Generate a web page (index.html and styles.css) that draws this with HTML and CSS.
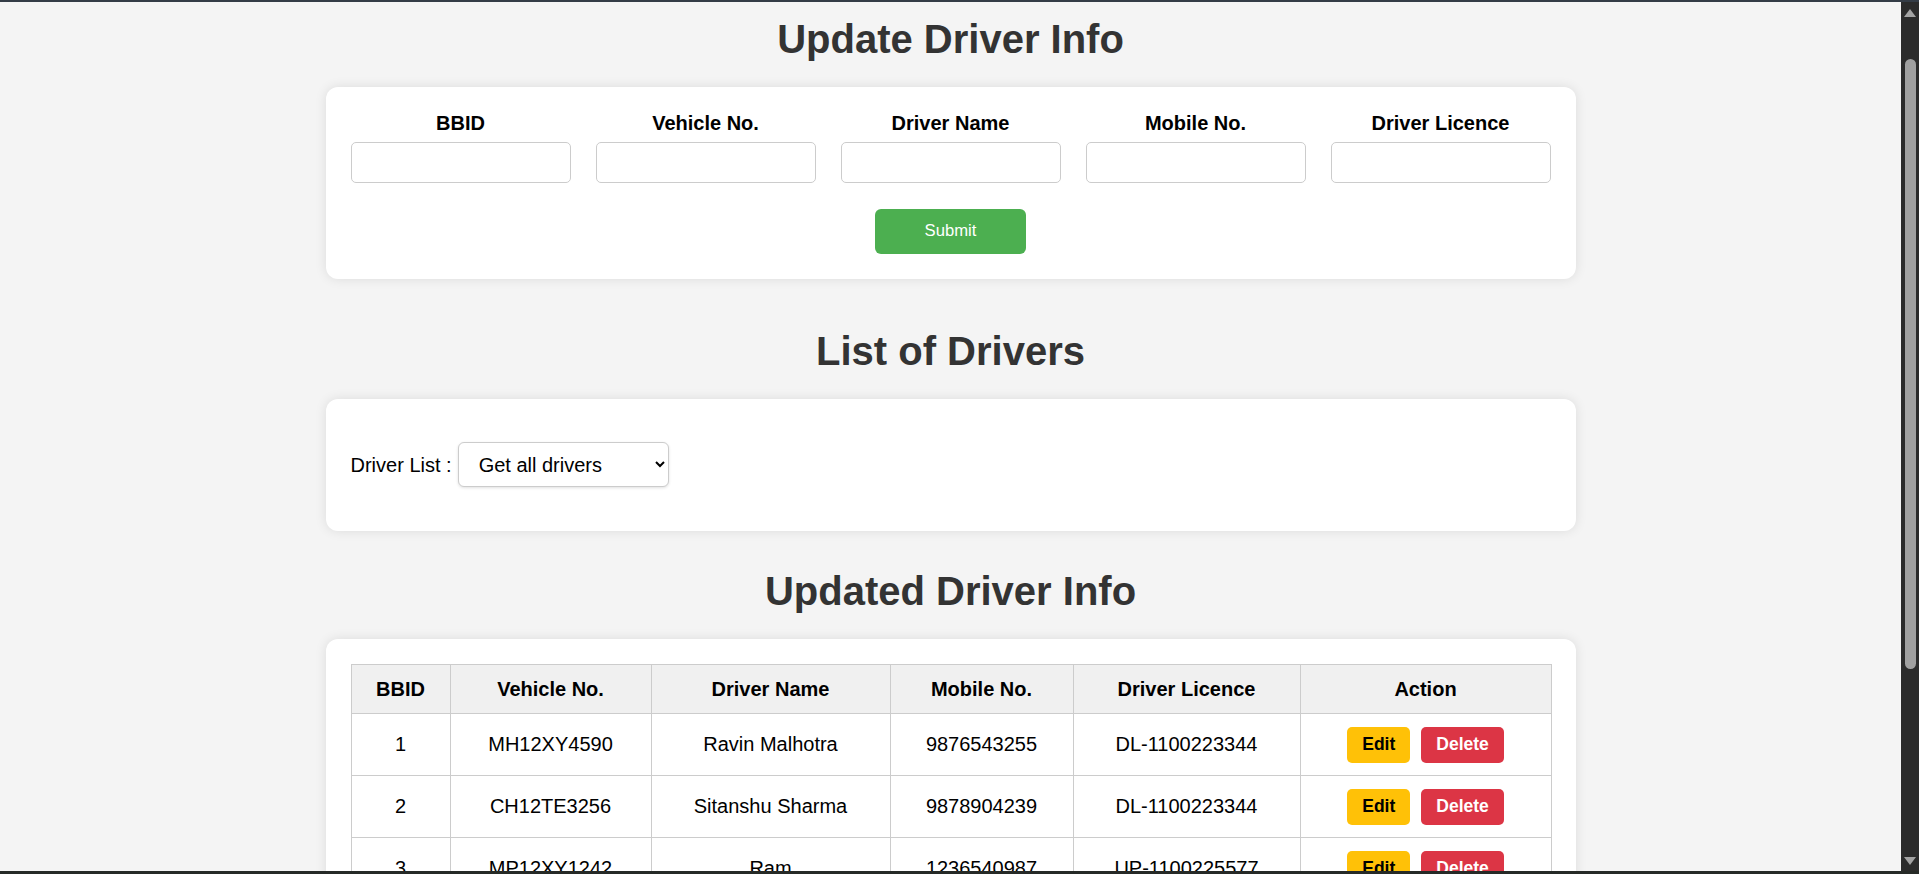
FILE: index.html
```html
<!DOCTYPE html>
<html lang="en">
<head>
<meta charset="utf-8">
<title>Driver Info</title>
<link rel="stylesheet" href="styles.css">
</head>
<body>
<div class="window">
  <div class="viewport">
    <main class="content">
      <h1 class="title">Update Driver Info</h1>
      <section class="card card-form">
        <form class="driver-form">
          <div class="fields">
            <div class="field"><label class="field-label" for="bbid">BBID</label><input class="field-input" id="bbid" type="text"></div>
            <div class="field"><label class="field-label" for="vno">Vehicle No.</label><input class="field-input" id="vno" type="text"></div>
            <div class="field"><label class="field-label" for="dname">Driver Name</label><input class="field-input" id="dname" type="text"></div>
            <div class="field"><label class="field-label" for="mobile">Mobile No.</label><input class="field-input" id="mobile" type="text"></div>
            <div class="field"><label class="field-label" for="licence">Driver Licence</label><input class="field-input" id="licence" type="text"></div>
          </div>
          <div class="submit-row"><button class="submit-btn" type="button">Submit</button></div>
        </form>
      </section>

      <h1 class="title">List of Drivers</h1>
      <section class="card card-filter">
        <div class="filter">
          <label class="filter-label" for="dlist">Driver List :</label>
          <select class="filter-select" id="dlist">
            <option>Get all drivers</option>
          </select>
        </div>
      </section>

      <h1 class="title">Updated Driver Info</h1>
      <section class="card card-table">
        <table class="drivers">
          <colgroup>
            <col class="c-id"><col class="c-veh"><col class="c-name"><col class="c-mob"><col class="c-lic"><col class="c-act">
          </colgroup>
          <thead>
            <tr><th>BBID</th><th>Vehicle No.</th><th>Driver Name</th><th>Mobile No.</th><th>Driver Licence</th><th>Action</th></tr>
          </thead>
          <tbody>
            <tr><td>1</td><td>MH12XY4590</td><td>Ravin Malhotra</td><td>9876543255</td><td>DL-1100223344</td><td><div class="actions"><button class="btn btn-edit" type="button">Edit</button><button class="btn btn-delete" type="button">Delete</button></div></td></tr>
            <tr><td>2</td><td>CH12TE3256</td><td>Sitanshu Sharma</td><td>9878904239</td><td>DL-1100223344</td><td><div class="actions"><button class="btn btn-edit" type="button">Edit</button><button class="btn btn-delete" type="button">Delete</button></div></td></tr>
            <tr><td>3</td><td>MP12XY1242</td><td>Ram</td><td>1236540987</td><td>UP-1100225577</td><td><div class="actions"><button class="btn btn-edit" type="button">Edit</button><button class="btn btn-delete" type="button">Delete</button></div></td></tr>
          </tbody>
        </table>
      </section>
    </main>
    <div class="scrollbar" aria-hidden="true">
      <div class="sb-up"></div>
      <div class="sb-thumb"></div>
      <div class="sb-track"></div>
      <div class="sb-down"></div>
    </div>
  </div>
</div>
</body>
</html>
```
FILE: styles.css
```css
* { box-sizing: border-box; }

html, body {
  margin: 0;
  height: 100%;
  overflow: hidden;
}

body {
  font-family: "Liberation Sans", Arial, sans-serif;
  background: #2b2b2b;
  color: #000;
}

.window {
  height: 874px;
  display: flex;
  flex-direction: column;
  border-top: 2px solid #343c46;
  border-bottom: 3px solid #262a27;
}

.viewport {
  flex: 1;
  display: flex;
  min-height: 0;
}

.content {
  flex: 1;
  min-width: 0;
  overflow: hidden;
  background: #f4f4f4;
  padding-top: 14px;
}

/* fake scrollbar */
.scrollbar {
  width: 18px;
  flex: none;
  background: #2b2b2b;
  display: flex;
  flex-direction: column;
  align-items: center;
}
.sb-up {
  margin-top: 7px;
  width: 0;
  height: 0;
  border-left: 6px solid transparent;
  border-right: 6px solid transparent;
  border-bottom: 8px solid #a3a3a3;
}
.sb-thumb {
  margin-top: 42px;
  width: 11px;
  height: 610px;
  border-radius: 6px;
  background: #a0a0a0;
}
.sb-track { flex: 1; }
.sb-down {
  margin-bottom: 6px;
  width: 0;
  height: 0;
  border-left: 6px solid transparent;
  border-right: 6px solid transparent;
  border-top: 8px solid #a3a3a3;
}

.title {
  margin: 0 0 25px;
  font-size: 40px;
  line-height: 46px;
  font-weight: bold;
  text-align: center;
  color: #333;
}

.card {
  width: 1250px;
  margin: 0 auto;
  background: #fff;
  border-radius: 12px;
  box-shadow: 0 0 12px rgba(0, 0, 0, 0.1);
  padding: 25px;
}

.card-form { margin-bottom: 49px; }
.card-filter { margin-bottom: 37px; padding: 43px 25px 44px; }
.card-table { margin-top: 1px; }

.fields {
  display: grid;
  grid-template-columns: repeat(5, 1fr);
  gap: 25px;
}

.field-label {
  display: block;
  text-align: center;
  font-weight: bold;
  font-size: 20px;
  line-height: 23px;
  margin-bottom: 7px;
}

.field-input {
  display: block;
  width: 100%;
  height: 41px;
  border: 1px solid #ccc;
  border-radius: 5px;
  background: #fff;
  font-family: inherit;
  font-size: 20px;
  padding: 0 10px;
}

.submit-row {
  margin-top: 26px;
  display: flex;
  justify-content: center;
}

.submit-btn {
  width: 151px;
  height: 45px;
  border: none;
  border-radius: 6px;
  background: #4caf50;
  color: #fff;
  font-family: inherit;
  font-size: 16.67px;
  padding: 0 0 2px;
}

.filter {
  display: flex;
  align-items: center;
  gap: 6px;
  font-size: 20px;
}

.filter-label { line-height: 23px; padding-top: 2px; }

.filter-select {
  width: 211px;
  height: 45px;
  border: 1px solid #ccc;
  border-radius: 6px;
  background: #fff;
  box-shadow: 0 1px 3px rgba(0, 0, 0, 0.12);
  font-family: inherit;
  font-size: 20px;
  color: #000;
  padding: 0 10px 0 16px;
}

.drivers {
  width: 100%;
  border-collapse: collapse;
  table-layout: fixed;
}

.c-id { width: 99px; }
.c-veh { width: 201px; }
.c-name { width: 239px; }
.c-mob { width: 183px; }
.c-lic { width: 227px; }
.c-act { width: 251px; }

.drivers th,
.drivers td {
  border: 1px solid #ccc;
  padding: 12.5px;
  text-align: center;
  font-size: 20px;
  line-height: 23px;
  color: #000;
}

.drivers th {
  background: #f0f0f0;
  font-weight: bold;
}

.actions {
  display: flex;
  justify-content: center;
  gap: 11px;
}

.btn {
  height: 36px;
  padding: 0 15px;
  border: none;
  border-radius: 5px;
  font-family: inherit;
  font-size: 17.5px;
  font-weight: bold;
}

.btn-edit { background: #ffc107; color: #000; }
.btn-delete { background: #dc3545; color: #fff; }
```
